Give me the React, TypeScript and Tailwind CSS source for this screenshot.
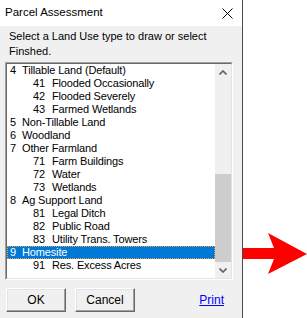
const items: { num: string; label: string; sub?: boolean; selected?: boolean }[] = [
  { num: '4', label: 'Tillable Land (Default)' },
  { num: '41', label: 'Flooded Occasionally', sub: true },
  { num: '42', label: 'Flooded Severely', sub: true },
  { num: '43', label: 'Farmed Wetlands', sub: true },
  { num: '5', label: 'Non-Tillable Land' },
  { num: '6', label: 'Woodland' },
  { num: '7', label: 'Other Farmland' },
  { num: '71', label: 'Farm Buildings', sub: true },
  { num: '72', label: 'Water', sub: true },
  { num: '73', label: 'Wetlands', sub: true },
  { num: '8', label: 'Ag Support Land' },
  { num: '81', label: 'Legal Ditch', sub: true },
  { num: '82', label: 'Public Road', sub: true },
  { num: '83', label: 'Utility Trans. Towers', sub: true },
  { num: '9', label: 'Homesite', selected: true },
  { num: '91', label: 'Res. Excess Acres', sub: true },
];

function Chevron({ down }: { down?: boolean }) {
  return (
    <svg width="8" height="5" viewBox="0 0 8 5" className={down ? 'rotate-180' : ''}>
      <path d="M0.5 4.5 L4 1 L7.5 4.5" fill="none" stroke="#606060" strokeWidth="1.6" />
    </svg>
  );
}

function Button({ children }: { children: React.ReactNode }) {
  return (
    <button className="w-[60px] h-[24px] bg-[#f0f0f0] border border-t-white border-l-white border-b-[#696969] border-r-[#696969] shadow-[inset_-1px_-1px_0_#a0a0a0,inset_1px_1px_0_#e3e3e3] text-[12px] text-black">
      {children}
    </button>
  );
}

export default function App() {
  return (
    <div className="flex w-[307px] h-[318px] bg-white font-['Liberation_Sans',Arial,sans-serif] overflow-hidden">
      <div className="w-[243px] h-[318px] shrink-0 flex flex-col border-r border-[#4a4a4a] bg-[#f0f0f0]">
        <div className="h-[26px] bg-white flex items-center justify-between pl-[5px] pr-[9px]">
          <span className="text-[11.5px] text-black">Parcel Assessment</span>
          <svg width="11" height="11" viewBox="0 0 11 11">
            <path d="M0.5 0.5 L10.5 10.5 M10.5 0.5 L0.5 10.5" stroke="#000" strokeWidth="1" />
          </svg>
        </div>
        <div className="pl-[9px] pt-[3px] text-[11px] leading-[15px] text-black">
          Select a Land Use type to draw or select
          <br />
          Finshed.
        </div>
        <div className="ml-[5px] mt-[3px] w-[228px] h-[218px] flex border border-t-[#a0a0a0] border-l-[#a0a0a0] border-b-white border-r-white">
          <div className="flex-1 flex bg-white border border-t-[#696969] border-l-[#696969] border-b-[#e3e3e3] border-r-[#e3e3e3]">
            <div className="w-[208px] flex flex-col">
              {items.map((it) => (
                <div
                  key={it.num}
                  className={
                    'h-[13px] flex items-center text-[11px] leading-[13px] tracking-[-0.15px] whitespace-nowrap ' +
                    (it.selected
                      ? 'bg-[#0078d7] text-white outline outline-1 outline-dotted outline-[#f0a030] -outline-offset-1'
                      : 'text-black')
                  }
                >
                  <span className={it.sub ? 'pl-[26px] w-[45px]' : 'pl-[3px] w-[15px]'}>{it.num}</span>
                  <span>{it.label}</span>
                </div>
              ))}
            </div>
            <div className="w-[16px] flex flex-col bg-[#f0f0f0]">
              <div className="h-[16px] flex items-center justify-center">
                <Chevron />
              </div>
              <div className="flex-1 flex flex-col justify-end">
                <div className="h-[88px] bg-[#cdcdcd]" />
              </div>
              <div className="h-[16px] flex items-center justify-center">
                <Chevron down />
              </div>
            </div>
          </div>
        </div>
        <div className="flex items-center pl-[6px] pr-[18px] mt-[7px]">
          <Button>OK</Button>
          <div className="ml-[9px]">
            <Button>Cancel</Button>
          </div>
          <a className="ml-auto text-[12px] text-[#0000ff] underline cursor-pointer">Print</a>
        </div>
      </div>
      <svg width="64" height="44" viewBox="0 0 64 44" className="mt-[232px] shrink-0">
        <polygon points="0,16 31,16 25,1 64,22 25,42 31,27 0,27" fill="#ff0000" />
      </svg>
    </div>
  );
}
